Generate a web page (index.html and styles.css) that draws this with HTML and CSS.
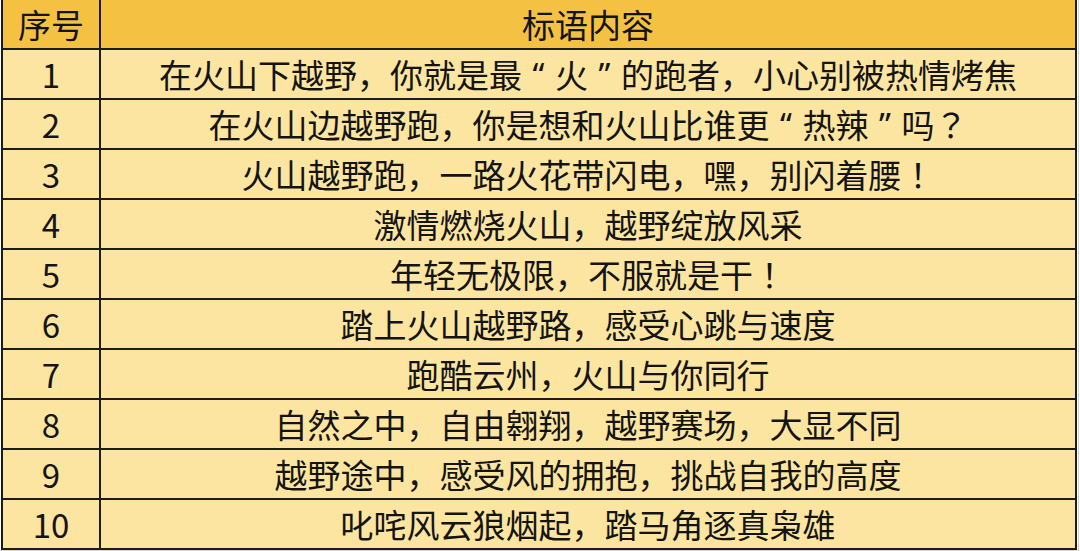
FILE: index.html
```html
<!DOCTYPE html>
<html lang="zh">
<head>
<meta charset="utf-8">
<title>标语内容</title>
<link rel="stylesheet" href="styles.css">
</head>
<body>
<div class="sheet">
  <div class="table">
    <div class="cell head">序号</div>
    <div class="cell head">标语内容</div>
    <div class="cell num">1</div>
    <div class="cell">在火山下越野，你就是最<span class="mark quote">“</span>火<span class="mark quote">”</span>的跑者，小心别被热情烤焦</div>
    <div class="cell num">2</div>
    <div class="cell">在火山边越野跑，你是想和火山比谁更<span class="mark quote">“</span>热辣<span class="mark quote">”</span>吗<span class="mark">？</span></div>
    <div class="cell num">3</div>
    <div class="cell">火山越野跑，一路火花带闪电，嘿，别闪着腰<span class="mark">！</span></div>
    <div class="cell num">4</div>
    <div class="cell">激情燃烧火山，越野绽放风采</div>
    <div class="cell num">5</div>
    <div class="cell">年轻无极限，不服就是干<span class="mark">！</span></div>
    <div class="cell num">6</div>
    <div class="cell">踏上火山越野路，感受心跳与速度</div>
    <div class="cell num">7</div>
    <div class="cell">跑酷云州，火山与你同行</div>
    <div class="cell num">8</div>
    <div class="cell">自然之中，自由翱翔，越野赛场，大显不同</div>
    <div class="cell num">9</div>
    <div class="cell">越野途中，感受风的拥抱，挑战自我的高度</div>
    <div class="cell num">10</div>
    <div class="cell">叱咤风云狼烟起，踏马角逐真枭雄</div>
  </div>
</div>
</body>
</html>
```

FILE: styles.css
```css
html, body {
  margin: 0;
  padding: 0;
  background: #ffffff;
}
body {
  font-family: "Noto Sans CJK SC", "Noto Sans", sans-serif;
  color: #141414;
  overflow: hidden;
}
.sheet {
  display: inline-block;
  padding: 0 1px 0 1px;
  border-right: 1px solid #d4d4d4;
  border-bottom: 1px solid #d4d4d4;
}
.table {
  width: 1076px;
  box-sizing: border-box;
  display: grid;
  grid-template-columns: 96px 1fr;
  grid-auto-rows: 48px;
  gap: 2px;
  padding: 0 2px 2px 2px;
  background: #1c1c1c;
}
.cell {
  display: flex;
  align-items: center;
  justify-content: center;
  background: #fce5a1;
  font-size: 33px;
  line-height: 1;
  white-space: nowrap;
  text-spacing-trim: space-all;
}
.cell.head {
  background: #f5c143;
}
.mark {
  font-family: "Noto Sans CJK TC", "Noto Sans CJK SC", sans-serif;
  display: inline-block;
  width: 1em;
  text-align: center;
}
.mark.quote {
  font-family: "Noto Sans", "DejaVu Sans", sans-serif;
}
```
